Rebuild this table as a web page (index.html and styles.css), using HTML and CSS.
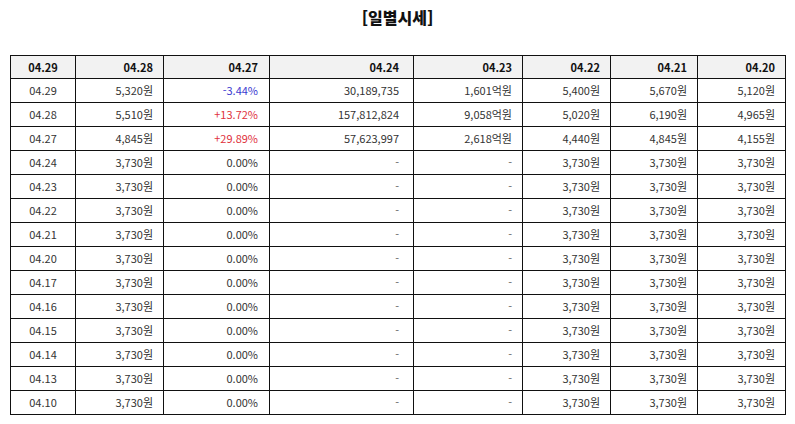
FILE: index.html
```html
<!DOCTYPE html>
<html lang="ko">
<head>
<meta charset="utf-8">
<title>일별시세</title>
<link rel="stylesheet" href="styles.css">
</head>
<body>
<div class="page">
  <h2 class="title">[일별시세]</h2>
  <table class="daily">
    <colgroup>
      <col class="c1"><col class="c2"><col class="c3"><col class="c4"><col class="c5"><col class="c6"><col class="c7"><col class="c8">
    </colgroup>
    <thead>
      <tr>
        <th class="center">04.29</th><th>04.28</th><th class="p3">04.27</th><th class="p4">04.24</th><th>04.23</th><th>04.22</th><th>04.21</th><th>04.20</th>
      </tr>
    </thead>
    <tbody>
      <tr><td class="center">04.29</td><td>5,320원</td><td class="p3 down">-3.44%</td><td class="p4">30,189,735</td><td>1,601억원</td><td>5,400원</td><td>5,670원</td><td>5,120원</td></tr>
      <tr><td class="center">04.28</td><td>5,510원</td><td class="p3 up">+13.72%</td><td class="p4">157,812,824</td><td>9,058억원</td><td>5,020원</td><td>6,190원</td><td>4,965원</td></tr>
      <tr><td class="center">04.27</td><td>4,845원</td><td class="p3 up">+29.89%</td><td class="p4">57,623,997</td><td>2,618억원</td><td>4,440원</td><td>4,845원</td><td>4,155원</td></tr>
      <tr><td class="center">04.24</td><td>3,730원</td><td class="p3">0.00%</td><td class="p4 dash">-</td><td class="dash">-</td><td>3,730원</td><td>3,730원</td><td>3,730원</td></tr>
      <tr><td class="center">04.23</td><td>3,730원</td><td class="p3">0.00%</td><td class="p4 dash">-</td><td class="dash">-</td><td>3,730원</td><td>3,730원</td><td>3,730원</td></tr>
      <tr><td class="center">04.22</td><td>3,730원</td><td class="p3">0.00%</td><td class="p4 dash">-</td><td class="dash">-</td><td>3,730원</td><td>3,730원</td><td>3,730원</td></tr>
      <tr><td class="center">04.21</td><td>3,730원</td><td class="p3">0.00%</td><td class="p4 dash">-</td><td class="dash">-</td><td>3,730원</td><td>3,730원</td><td>3,730원</td></tr>
      <tr><td class="center">04.20</td><td>3,730원</td><td class="p3">0.00%</td><td class="p4 dash">-</td><td class="dash">-</td><td>3,730원</td><td>3,730원</td><td>3,730원</td></tr>
      <tr><td class="center">04.17</td><td>3,730원</td><td class="p3">0.00%</td><td class="p4 dash">-</td><td class="dash">-</td><td>3,730원</td><td>3,730원</td><td>3,730원</td></tr>
      <tr><td class="center">04.16</td><td>3,730원</td><td class="p3">0.00%</td><td class="p4 dash">-</td><td class="dash">-</td><td>3,730원</td><td>3,730원</td><td>3,730원</td></tr>
      <tr><td class="center">04.15</td><td>3,730원</td><td class="p3">0.00%</td><td class="p4 dash">-</td><td class="dash">-</td><td>3,730원</td><td>3,730원</td><td>3,730원</td></tr>
      <tr><td class="center">04.14</td><td>3,730원</td><td class="p3">0.00%</td><td class="p4 dash">-</td><td class="dash">-</td><td>3,730원</td><td>3,730원</td><td>3,730원</td></tr>
      <tr><td class="center">04.13</td><td>3,730원</td><td class="p3">0.00%</td><td class="p4 dash">-</td><td class="dash">-</td><td>3,730원</td><td>3,730원</td><td>3,730원</td></tr>
      <tr><td class="center">04.10</td><td>3,730원</td><td class="p3">0.00%</td><td class="p4 dash">-</td><td class="dash">-</td><td>3,730원</td><td>3,730원</td><td>3,730원</td></tr>
    </tbody>
  </table>
</div>
</body>
</html>
```
FILE: styles.css
```css
html, body {
  margin: 0;
  padding: 0;
  background: #ffffff;
}
.page {
  padding: 8px 10px 0 10px;
  font-family: "Noto Sans CJK KR", "Noto Sans", sans-serif;
  color: #333333;
}
.title {
  margin: 0;
  text-align: center;
  font-size: 16px;
  line-height: 18px;
  font-weight: 900;
  color: #111111;
}
.daily {
  margin-top: 29px;
  width: 775px;
  border-collapse: collapse;
  table-layout: fixed;
  font-size: 11px;
}
.c1 { width: 65px; }
.c2 { width: 88px; }
.c3 { width: 106px; }
.c4 { width: 144px; }
.c5 { width: 109px; }
.c6 { width: 88px; }
.c7 { width: 87px; }
.c8 { width: 88px; }
.daily th, .daily td {
  border: 1px solid #111111;
  text-align: right;
  padding: 0 10px 0 0;
  white-space: nowrap;
}
.daily th {
  height: 22px;
  line-height: 22px;
  background: #f2f2f2;
  font-weight: bold;
  color: #111111;
}
.daily td {
  height: 23px;
  line-height: 23px;
}
.daily .center {
  text-align: center;
  padding: 0;
}
.daily .p3 { padding-right: 11px; }
.daily .p4 { padding-right: 14px; }
.down { color: #3a3ad0; }
.up { color: #e0323c; }
.dash { color: #666666; }
```
